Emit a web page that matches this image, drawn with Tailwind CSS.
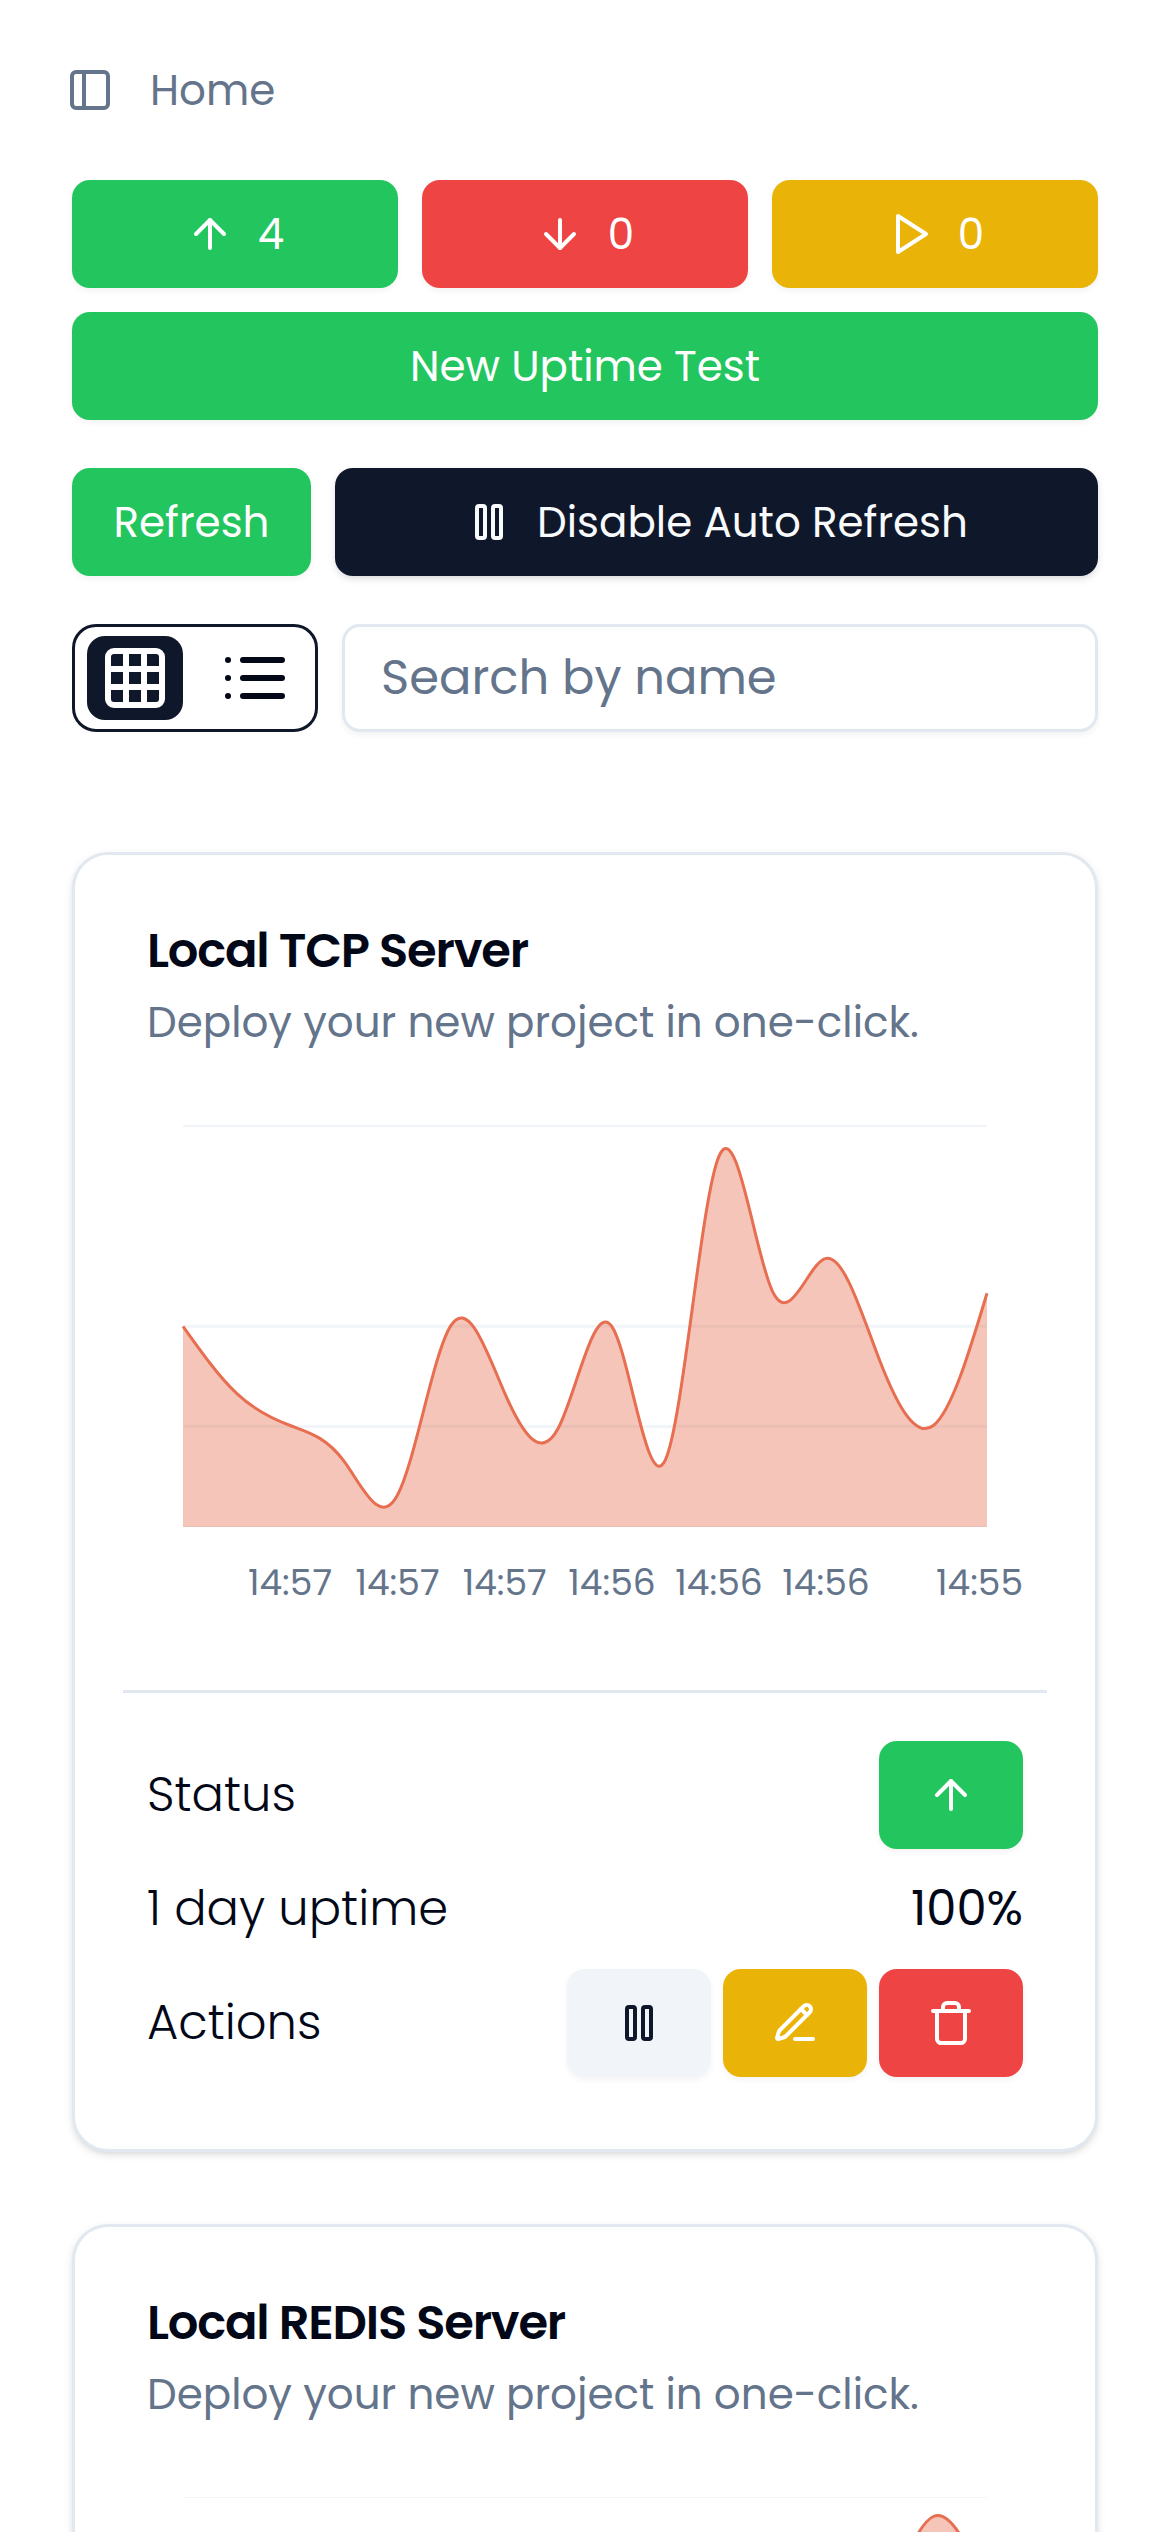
<!DOCTYPE html>
<html lang="en">
<head>
<meta charset="utf-8">
<meta name="viewport" content="width=device-width, initial-scale=1">
<title>Home</title>
<script src="https://cdn.jsdelivr.net/npm/@tailwindcss/browser@4"></script>
</head>
<body class="bg-white font-['Poppins','Inter',sans-serif] text-[#020817]">

<svg class="hidden">
  <defs>
    <symbol id="panel-left" viewBox="0 0 24 24"><rect width="18" height="18" x="3" y="3" rx="2"/><path d="M9 3v18"/></symbol>
    <symbol id="arrow-up" viewBox="0 0 24 24"><path d="m5 12 7-7 7 7"/><path d="M12 19V5"/></symbol>
    <symbol id="arrow-down" viewBox="0 0 24 24"><path d="M12 5v14"/><path d="m19 12-7 7-7-7"/></symbol>
    <symbol id="play" viewBox="0 0 24 24"><polygon points="6 3 20 12 6 21 6 3"/></symbol>
    <symbol id="pause" viewBox="0 0 24 24"><rect x="14" y="4" width="4" height="16" rx="1"/><rect x="6" y="4" width="4" height="16" rx="1"/></symbol>
    <symbol id="grid" viewBox="0 0 24 24"><rect width="18" height="18" x="3" y="3" rx="2"/><path d="M3 9h18M3 15h18M9 3v18M15 3v18"/></symbol>
    <symbol id="list" viewBox="0 0 24 24"><path d="M8 6h13M8 12h13M8 18h13M3 6h.01M3 12h.01M3 18h.01"/></symbol>
    <symbol id="pen-line" viewBox="0 0 24 24"><path d="M12 20h9"/><path d="M16.376 3.622a1 1 0 0 1 3.002 3.002L7.368 18.635a2 2 0 0 1-.855.506l-2.872.838a.5.5 0 0 1-.62-.62l.838-2.872a2 2 0 0 1 .506-.854z"/><path d="m15 5 3 3"/></symbol>
    <symbol id="trash" viewBox="0 0 24 24"><path d="M3 6h18"/><path d="M19 6v14c0 1-1 2-2 2H7c-1 0-2-1-2-2V6"/><path d="M8 6V4c0-1 1-2 2-2h4c1 0 2 1 2 2v2"/></symbol>
  </defs>
</svg>

<div class="h-[2532px] overflow-hidden">
<header class="flex h-[180px] items-center gap-9 px-[66px] text-[42px] text-[#64748b]">
  <svg class="size-12 fill-none stroke-current stroke-2 [stroke-linecap:round] [stroke-linejoin:round]"><use href="#panel-left"/></svg>
  <span>Home</span>
</header>

<main class="px-[72px]">
  <section class="grid grid-cols-3 gap-6 text-[42px] text-white">
    <div class="flex h-[108px] items-center justify-center gap-6 rounded-[18px] bg-[#22c55e] shadow-[0_3px_6px_rgb(0_0_0/0.05)]">
      <svg class="size-12 fill-none stroke-current stroke-2 [stroke-linecap:round] [stroke-linejoin:round]"><use href="#arrow-up"/></svg><span>4</span>
    </div>
    <div class="flex h-[108px] items-center justify-center gap-6 rounded-[18px] bg-[#ef4444] shadow-[0_3px_6px_rgb(0_0_0/0.05)]">
      <svg class="size-12 fill-none stroke-current stroke-2 [stroke-linecap:round] [stroke-linejoin:round]"><use href="#arrow-down"/></svg><span>0</span>
    </div>
    <div class="flex h-[108px] items-center justify-center gap-6 rounded-[18px] bg-[#eab308] shadow-[0_3px_6px_rgb(0_0_0/0.05)]">
      <svg class="size-12 fill-none stroke-current stroke-2 [stroke-linecap:round] [stroke-linejoin:round]"><use href="#play"/></svg><span>0</span>
    </div>
    <button class="col-span-3 flex h-[108px] items-center justify-center rounded-[18px] bg-[#22c55e] shadow-[0_3px_6px_rgb(0_0_0/0.05)]">New Uptime Test</button>
  </section>

  <section class="mt-12 flex gap-6 text-[42px] text-white">
    <button class="flex h-[108px] w-[239px] items-center justify-center rounded-[18px] bg-[#22c55e] shadow-[0_3px_6px_rgb(0_0_0/0.05)]">Refresh</button>
    <button class="flex h-[108px] flex-1 items-center justify-center gap-6 rounded-[18px] bg-[#0f172a] text-[#f8fafc] shadow-[0_3px_9px_rgb(0_0_0/0.1),0_3px_6px_-3px_rgb(0_0_0/0.1)]">
      <svg class="size-12 fill-none stroke-current stroke-2 [stroke-linecap:round] [stroke-linejoin:round]"><use href="#pause"/></svg><span>Disable Auto Refresh</span>
    </button>
  </section>

  <section class="mt-12 flex gap-6">
    <div class="flex h-[108px] w-[246px] items-center gap-6 rounded-3xl border-3 border-[#0f172a] px-3">
      <button class="flex h-[84px] w-24 items-center justify-center rounded-[18px] bg-[#0f172a] text-white">
        <svg class="size-[72px] fill-none stroke-current stroke-2 [stroke-linecap:round] [stroke-linejoin:round]"><use href="#grid"/></svg>
      </button>
      <button class="flex h-[84px] w-24 items-center justify-center">
        <svg class="size-[72px] fill-none stroke-current stroke-2 [stroke-linecap:round] [stroke-linejoin:round]"><use href="#list"/></svg>
      </button>
    </div>
    <input type="text" placeholder="Search by name" class="h-[108px] min-w-0 flex-1 rounded-[18px] border-3 border-[#e2e8f0] px-9 text-[48px] shadow-[0_3px_6px_rgb(0_0_0/0.05)] placeholder:text-[#64748b]">
  </section>

  <section class="mt-[120px] flex flex-col gap-[72px]">
    <article class="rounded-[36px] border-3 border-[#e2e8f0] bg-white shadow-[0_3px_9px_rgb(0_0_0/0.1),0_3px_6px_-3px_rgb(0_0_0/0.1)]">
      <div class="flex flex-col gap-[18px] px-[72px] pt-[72px]">
        <h3 class="text-[48px] leading-[48px] font-semibold tracking-tight">Local TCP Server</h3>
        <p class="text-[42px] leading-[60px] text-[#64748b]">Deploy your new project in one-click.</p>
      </div>
      <svg class="block h-[637px] w-full" viewBox="0 0 1020 637">
        <g class="fill-none stroke-[#f1f5f9] stroke-3">
          <path d="M108 72h804v2h-804z" class="fill-[#f1f5f9] stroke-none"/>
          <path d="M108 273.2h804M108 373.5h804"/>
          <path d="M108 473.5h804" class="stroke-1"/>
        </g>
        <path class="fill-[#e76e50]/40" data-area="273.4 340.4 372.5 407.9 442.2 272.4 339.9 375.2 273.4 406.8 103.1 238.6 205.4 307.7 372.5 240.2"/>
        <path class="fill-none stroke-[#e76e50] stroke-3" data-line="273.4 340.4 372.5 407.9 442.2 272.4 339.9 375.2 273.4 406.8 103.1 238.6 205.4 307.7 372.5 240.2"/>
        <g class="fill-[#64748b] text-[36px] [text-anchor:middle]">
          <text x="215" y="542">14:57</text><text x="322.5" y="542">14:57</text><text x="429.7" y="542">14:57</text><text x="537" y="542">14:56</text><text x="644" y="542">14:56</text><text x="751" y="542">14:56</text><text x="904.5" y="542">14:55</text>
        </g>
      </svg>
      <div class="mx-12 h-[3px] bg-[#e2e8f0]"></div>
      <div class="flex flex-col px-[72px] pt-12 pb-[72px] text-[48px]">
        <div class="flex h-[108px] items-center justify-between">
          <span class="font-light">Status</span>
          <span class="flex h-[108px] w-36 items-center justify-center rounded-[18px] bg-[#22c55e] text-white shadow-[0_3px_6px_rgb(0_0_0/0.05)]">
            <svg class="size-12 fill-none stroke-current stroke-2 [stroke-linecap:round] [stroke-linejoin:round]"><use href="#arrow-up"/></svg>
          </span>
        </div>
        <div class="flex h-[120px] items-center justify-between">
          <span class="font-light">1 day uptime</span>
          <span>100%</span>
        </div>
        <div class="flex h-[108px] items-center justify-between">
          <span class="font-light">Actions</span>
          <div class="flex gap-3">
            <button class="flex h-[108px] w-36 items-center justify-center rounded-[18px] bg-[#f1f5f9] text-[#0f172a] shadow-[0_3px_6px_rgb(0_0_0/0.05)]">
              <svg class="size-12 fill-none stroke-current stroke-2 [stroke-linecap:round] [stroke-linejoin:round]"><use href="#pause"/></svg>
            </button>
            <button class="flex h-[108px] w-36 items-center justify-center rounded-[18px] bg-[#eab308] text-white shadow-[0_3px_6px_rgb(0_0_0/0.05)]">
              <svg class="size-12 fill-none stroke-current stroke-2 [stroke-linecap:round] [stroke-linejoin:round]"><use href="#pen-line"/></svg>
            </button>
            <button class="flex h-[108px] w-36 items-center justify-center rounded-[18px] bg-[#ef4444] text-white shadow-[0_3px_6px_rgb(0_0_0/0.05)]">
              <svg class="size-12 fill-none stroke-current stroke-2 [stroke-linecap:round] [stroke-linejoin:round]"><use href="#trash"/></svg>
            </button>
          </div>
        </div>
      </div>
    </article>

    <article class="rounded-t-[36px] border-3 border-b-0 border-[#e2e8f0] bg-white shadow-[0_3px_9px_rgb(0_0_0/0.1),0_3px_6px_-3px_rgb(0_0_0/0.1)]">
      <div class="flex flex-col gap-[18px] px-[72px] pt-[72px]">
        <h3 class="text-[48px] leading-[48px] font-semibold tracking-tight">Local REDIS Server</h3>
        <p class="text-[42px] leading-[60px] text-[#64748b]">Deploy your new project in one-click.</p>
      </div>
      <svg class="block h-[120px] w-full" viewBox="0 0 1020 120">
        <path class="fill-none stroke-[#f1f5f9]" d="M108 72.5h804"/>
        <path class="fill-[#e76e50]/40" data-area="257 320 350 330 300 310 320 300 280 300 290 280 260 193 91.5 165"/>
        <path class="fill-none stroke-[#e76e50] stroke-3" data-line="257 320 350 330 300 310 320 300 280 300 290 280 260 193 91.5 165"/>
      </svg>
    </article>
  </section>
</main>
</div>

<script>
  // Natural cubic spline through equally spaced samples.
  const LEFT = 108, WIDTH = 804, BASE = 474;
  function spline(ys) {
    const n = ys.length, step = WIDTH / (n - 1);
    const m = new Array(n).fill(0), c = new Array(n).fill(0), d = new Array(n).fill(0);
    for (let i = 1; i < n - 1; i++) {
      const r = 6 * (ys[i + 1] - 2 * ys[i] + ys[i - 1]);
      const k = 4 - c[i - 1];
      c[i] = 1 / k;
      d[i] = (r - d[i - 1]) / k;
    }
    for (let i = n - 2; i > 0; i--) m[i] = d[i] - c[i] * m[i + 1];
    let path = `M${LEFT} ${ys[0]}`;
    for (let i = 0; i < n - 1; i++) {
      const dy = ys[i + 1] - ys[i];
      const s0 = dy - (2 * m[i] + m[i + 1]) / 6, s1 = dy + (m[i] + 2 * m[i + 1]) / 6;
      const x = LEFT + i * step;
      path += `C${x + step / 3} ${ys[i] + s0 / 3} ${x + step * 2 / 3} ${ys[i + 1] - s1 / 3} ${x + step} ${ys[i + 1]}`;
    }
    return path;
  }
  document.querySelectorAll('[data-line]').forEach(p => p.setAttribute('d', spline(p.dataset.line.split(' ').map(Number))));
  document.querySelectorAll('[data-area]').forEach(p => p.setAttribute('d', spline(p.dataset.area.split(' ').map(Number)) + `V${BASE}H${LEFT}Z`));
</script>
</body>
</html>
